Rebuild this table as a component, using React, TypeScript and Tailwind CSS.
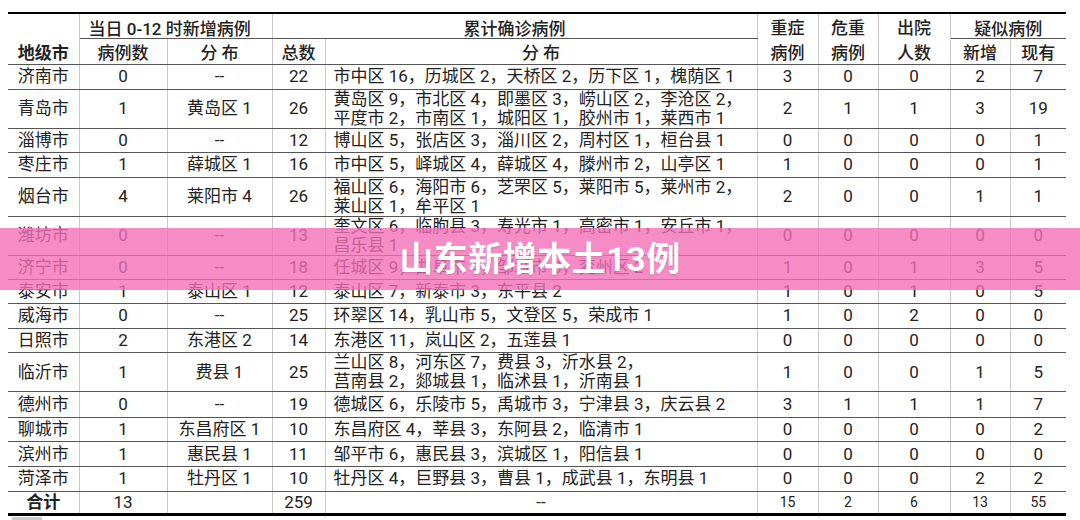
type Row = {
  city: string;
  newCount: string;
  newDist: string;
  total: string;
  dist: string[];
  rest: string[];
  h: string;
};

const rows: Row[] = [
  { city: '济南市', newCount: '0', newDist: '--', total: '22', dist: ['市中区 16，历城区 2，天桥区 2，历下区 1，槐荫区 1'], rest: ['3', '0', '0', '2', '7'], h: 'h-[24.6px]' },
  { city: '青岛市', newCount: '1', newDist: '黄岛区 1', total: '26', dist: ['黄岛区 9，市北区 4，即墨区 3，崂山区 2，李沧区 2，', '平度市 2，市南区 1，城阳区 1，胶州市 1，莱西市 1'], rest: ['2', '1', '1', '3', '19'], h: 'h-[38.6px]' },
  { city: '淄博市', newCount: '0', newDist: '--', total: '12', dist: ['博山区 5，张店区 3，淄川区 2，周村区 1，桓台县 1'], rest: ['0', '0', '0', '0', '1'], h: 'h-[24.6px]' },
  { city: '枣庄市', newCount: '1', newDist: '薛城区 1', total: '16', dist: ['市中区 5，峄城区 4，薛城区 4，滕州市 2，山亭区 1'], rest: ['1', '0', '0', '0', '1'], h: 'h-[24.6px]' },
  { city: '烟台市', newCount: '4', newDist: '莱阳市 4', total: '26', dist: ['福山区 6，海阳市 6，芝罘区 5，莱阳市 5，莱州市 2，', '莱山区 1，牟平区 1'], rest: ['2', '0', '0', '1', '1'], h: 'h-[37.6px]' },
  { city: '潍坊市', newCount: '0', newDist: '--', total: '13', dist: ['奎文区 6，临朐县 3，寿光市 1，高密市 1，安丘市 1，', '昌乐县 1'], rest: ['0', '0', '0', '0', '0'], h: 'h-[37.6px]' },
  { city: '济宁市', newCount: '0', newDist: '--', total: '18', dist: ['任城区 9，曲阜市 4，邹城市 3，兖州区 2'], rest: ['1', '0', '1', '3', '5'], h: 'h-[24.6px]' },
  { city: '泰安市', newCount: '1', newDist: '泰山区 1', total: '12', dist: ['泰山区 7，新泰市 3，东平县 2'], rest: ['1', '0', '1', '0', '5'], h: 'h-[23.6px]' },
  { city: '威海市', newCount: '0', newDist: '--', total: '25', dist: ['环翠区 14，乳山市 5，文登区 5，荣成市 1'], rest: ['1', '0', '2', '0', '0'], h: 'h-[24.6px]' },
  { city: '日照市', newCount: '2', newDist: '东港区 2', total: '14', dist: ['东港区 11，岚山区 2，五莲县 1'], rest: ['0', '0', '0', '0', '0'], h: 'h-[24.6px]' },
  { city: '临沂市', newCount: '1', newDist: '费县 1', total: '25', dist: ['兰山区 8，河东区 7，费县 3，沂水县 2，', '莒南县 2，郯城县 1，临沭县 1，沂南县 1'], rest: ['1', '0', '0', '1', '5'], h: 'h-[36.6px]' },
  { city: '德州市', newCount: '0', newDist: '--', total: '19', dist: ['德城区 6，乐陵市 5，禹城市 3，宁津县 3，庆云县 2'], rest: ['3', '1', '1', '1', '7'], h: 'h-[25.6px]' },
  { city: '聊城市', newCount: '1', newDist: '东昌府区 1', total: '10', dist: ['东昌府区 4，莘县 3，东阿县 2，临清市 1'], rest: ['0', '0', '0', '0', '2'], h: 'h-[24.6px]' },
  { city: '滨州市', newCount: '1', newDist: '惠民县 1', total: '11', dist: ['邹平市 6，惠民县 3，滨城区 1，阳信县 1'], rest: ['0', '0', '0', '0', '0'], h: 'h-[24.6px]' },
  { city: '菏泽市', newCount: '1', newDist: '牡丹区 1', total: '10', dist: ['牡丹区 4，巨野县 3，曹县 1，成武县 1，东明县 1'], rest: ['0', '0', '0', '2', '2'], h: 'h-[24.6px]' },
];

const totals = ['15', '2', '6', '13', '55'];

// dark horizontal rules, light vertical rules
const rules = 'border-b border-b-[#555] border-r border-r-[#c8c8c8] p-0 text-center';
const cell = `${rules} align-middle`;
const last = 'border-b border-b-[#555] p-0 text-center align-middle';

function App() {
  return (
    <div
      className="relative w-[1080px] h-[520px] bg-white text-[#222] overflow-hidden"
      style={{ fontFamily: 'Roboto, "Noto Sans CJK SC", sans-serif' }}
    >
      <div className="pt-[12px] pl-[8px]">
        <table className="table-fixed border-collapse w-[1058px] text-[17px] leading-[19px] border-t-2 border-t-black border-b-[3px] border-b-black">
          <colgroup>
            <col className="w-[71px]" />
            <col className="w-[88px]" />
            <col className="w-[105px]" />
            <col className="w-[53px]" />
            <col className="w-[432px]" />
            <col className="w-[61px]" />
            <col className="w-[60px]" />
            <col className="w-[72px]" />
            <col className="w-[60px]" />
            <col className="w-[56px]" />
          </colgroup>
          <thead>
            <tr className="h-[24.6px]">
              <th rowSpan={2} className={`${rules} align-bottom font-bold`}>
                <div className="pb-[1px]">地级市</div>
              </th>
              <th colSpan={2} className={`${cell} text-left pl-[9px] font-medium`}>
                <div className="translate-y-[3px]">当日 0-12 时新增病例</div>
              </th>
              <th colSpan={2} className={`${cell} font-medium`}>
                <div className="translate-y-[3px]">累计确诊病例</div>
              </th>
              <th rowSpan={2} className={`${cell} font-medium leading-[25px]`}>
                <div className="translate-y-[2px]">重症<br />病例</div>
              </th>
              <th rowSpan={2} className={`${cell} font-medium leading-[25px]`}>
                <div className="translate-y-[2px]">危重<br />病例</div>
              </th>
              <th rowSpan={2} className={`${cell} font-medium leading-[25px]`}>
                <div className="translate-y-[2px]">出院<br />人数</div>
              </th>
              <th colSpan={2} className={`${last} font-medium`}>
                <div className="translate-y-[3px]">疑似病例</div>
              </th>
            </tr>
            <tr className="h-[24.6px]">
              <th className={`${cell} font-medium`}><div className="translate-y-[2px]">病例数</div></th>
              <th className={`${cell} font-medium`}><div className="translate-y-[2px]">分&nbsp;布</div></th>
              <th className={`${cell} font-medium`}><div className="translate-y-[2px]">总数</div></th>
              <th className={`${cell} font-medium`}><div className="translate-y-[2px]">分&nbsp;布</div></th>
              <th className={`${cell} font-medium`}><div className="translate-y-[2px]">新增</div></th>
              <th className={`${last} font-medium`}><div className="translate-y-[2px]">现有</div></th>
            </tr>
          </thead>
          <tbody>
            {rows.map((r) => (
              <tr key={r.city} className={r.h}>
                <td className={cell}>{r.city}</td>
                <td className={cell}>{r.newCount}</td>
                <td className={cell}>{r.newDist}</td>
                <td className={cell}>{r.total}</td>
                <td className={`${cell} text-left pl-[8px] whitespace-nowrap`}>
                  {r.dist.map((line, i) => (
                    <div key={i}>{line}</div>
                  ))}
                </td>
                {r.rest.map((v, i) => (
                  <td key={i} className={i === 4 ? last : cell}>{v}</td>
                ))}
              </tr>
            ))}
            <tr className="h-[23.6px]">
              <td className={`${cell} font-bold`}>合计</td>
              <td className={cell}>13</td>
              <td className={cell}></td>
              <td className={cell}>259</td>
              <td className={cell}>--</td>
              {totals.map((v, i) => (
                <td key={i} className={`${i === 4 ? last : cell} text-[14px]`}>{v}</td>
              ))}
            </tr>
          </tbody>
        </table>
        <div className="mt-[1px] ml-[4px] w-[30px] h-[3px] bg-[#ccc]" />
      </div>

      <div className="absolute left-0 top-[228px] w-full h-[62px] bg-[rgba(243,111,184,0.8)] flex items-center justify-center">
        <span className="text-white font-bold text-[34px] leading-none tracking-[0.5px] [text-shadow:0_1px_2px_rgba(0,0,0,0.15)]">
          山东新增本土13例
        </span>
      </div>
    </div>
  );
}

export default App;
